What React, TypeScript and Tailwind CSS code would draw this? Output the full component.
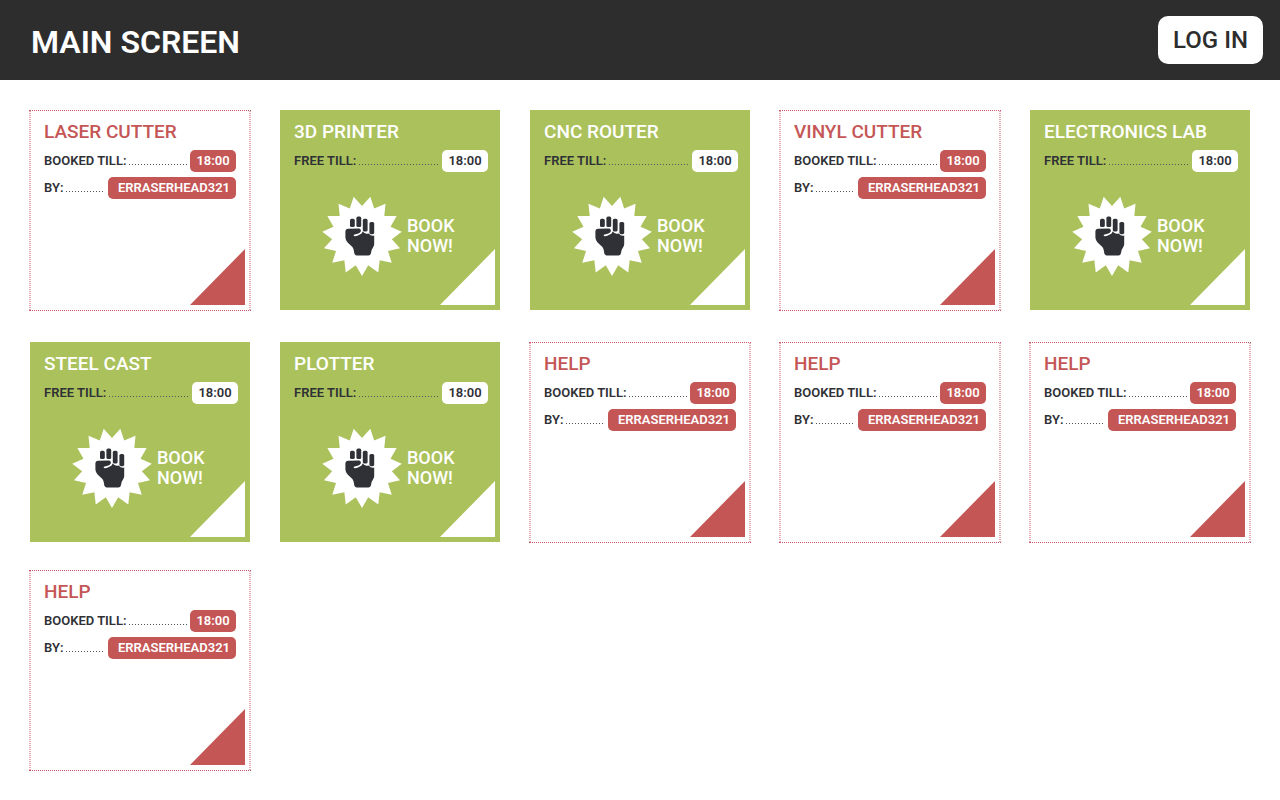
type Station = {
  name: string;
  time: string;
  bookedBy?: string;
};

const stations: Station[] = [
  { name: 'LASER CUTTER', time: '18:00', bookedBy: 'ERRASERHEAD321' },
  { name: '3D PRINTER', time: '18:00' },
  { name: 'CNC ROUTER', time: '18:00' },
  { name: 'VINYL CUTTER', time: '18:00', bookedBy: 'ERRASERHEAD321' },
  { name: 'ELECTRONICS LAB', time: '18:00' },
  { name: 'STEEL CAST', time: '18:00' },
  { name: 'PLOTTER', time: '18:00' },
  { name: 'HELP', time: '18:00', bookedBy: 'ERRASERHEAD321' },
  { name: 'HELP', time: '18:00', bookedBy: 'ERRASERHEAD321' },
  { name: 'HELP', time: '18:00', bookedBy: 'ERRASERHEAD321' },
  { name: 'HELP', time: '18:00', bookedBy: 'ERRASERHEAD321' },
];

const SPIKES = 15;

// Points of a star whose first spike faces straight down.
const starPoints = Array.from({ length: SPIKES * 2 }, (_, i) => {
  const radius = i % 2 === 0 ? 40 : 30;
  const angle = (Math.PI * i) / SPIKES;
  const x = 40 + radius * Math.sin(angle);
  const y = 40 + radius * Math.cos(angle);
  return `${x.toFixed(2)},${y.toFixed(2)}`;
}).join(' ');

function FistBadge() {
  return (
    <svg viewBox="0 0 80 80" className="size-20 shrink-0" aria-hidden="true">
      <polygon points={starPoints} fill="#ffffff" />
      <g fill="#2f3136">
        <rect x="28" y="22.8" width="4.8" height="8.2" rx="1.6" />
        <rect x="34.4" y="20.6" width="4.8" height="10.4" rx="1.6" />
        <rect x="40.8" y="22.8" width="4.8" height="12.8" rx="1.6" />
        <rect x="47.4" y="26" width="4.8" height="12.2" rx="1.6" />
        <path d="M26.2 32.8 Q23.4 33 23.4 35.6 V41.6 Q23.6 44.6 25.6 46.4 L30.4 51 Q31.8 52.6 32 55.6 Q32.2 59.4 34.6 59.4 H46.6 Q48.8 59.4 49 57 Q49.2 53.6 51 51.4 Q52.2 50 52.2 48 V39.4 Q49 40.4 46.8 37.4 Q43 38.6 40.6 35.6 Q40.2 37.8 37.4 38.8 Q34.6 40.6 31.8 40 V38.8 L36.4 37.4 Q39.4 36.2 38.8 34 Q38.4 32.6 36.6 32.6 Z" />
      </g>
    </svg>
  );
}

function Leader() {
  return (
    <span className="mx-[3px] mt-[7px] h-px flex-1 bg-[repeating-linear-gradient(90deg,#55565a_0_1px,transparent_1px_3px)]" />
  );
}

function StationCard({ station }: { station: Station }) {
  const booked = station.bookedBy !== undefined;
  return (
    <article
      className={
        booked
          ? 'relative -mx-px h-[201px] border-y border-dotted border-[#c9586a] bg-[repeating-linear-gradient(#e3a9b1_0_1px,transparent_1px_2px),repeating-linear-gradient(#e3a9b1_0_1px,transparent_1px_2px)] bg-[length:2px_100%] bg-[position:left,right] bg-no-repeat px-[15px] pt-[9px]'
          : 'relative h-[200px] bg-[#abc15c] pt-2.5 pr-3 pl-3.5'
      }
    >
      <h2
        className={
          booked ? 'text-[19px]/6 font-medium text-[#c55656]' : 'text-[19px]/6 font-medium text-white'
        }
      >
        {station.name}
      </h2>
      <dl className="mt-1.5 flex flex-col gap-[5px] text-[13px]/[22px] text-[#2f3136]">
        <div className="flex items-center">
          <dt className="font-semibold">{booked ? 'BOOKED TILL:' : 'FREE TILL:'}</dt>
          <Leader />
          <dd
            className={
              booked
                ? 'w-[46px] rounded-[5px] bg-[#c55656] text-center font-semibold text-white'
                : 'w-[46px] rounded-[5px] bg-white text-center font-semibold'
            }
          >
            {station.time}
          </dd>
        </div>
        {booked && (
          <div className="flex items-center">
            <dt className="font-semibold">BY:</dt>
            <Leader />
            <dd className="min-w-32 rounded-[5px] bg-[#c55656] pr-1.5 pl-2 text-right font-semibold text-white">
              {station.bookedBy}
            </dd>
          </div>
        )}
      </dl>
      {!booked && (
        <button
          type="button"
          className="mt-6 ml-7 flex items-center gap-[5px] text-left text-lg/5 font-medium text-white"
        >
          <FistBadge />
          <span>
            BOOK
            <br />
            NOW!
          </span>
        </button>
      )}
      <span
        className={
          booked
            ? 'absolute right-1.5 bottom-[5px] h-14 w-[55px] bg-[#c55656] [clip-path:polygon(100%_0,100%_100%,0_100%)]'
            : 'absolute right-[5px] bottom-[5px] h-14 w-[55px] bg-white [clip-path:polygon(100%_0,100%_100%,0_100%)]'
        }
      />
    </article>
  );
}

export default function App() {
  return (
    <div className="min-h-screen bg-white font-[Roboto,sans-serif]">
      <header className="flex h-20 items-center justify-between bg-[#2d2d2d] pr-[17px] pl-[31px]">
        <h1 className="pt-1 text-[32px]/10 font-semibold text-white">MAIN SCREEN</h1>
        <button
          type="button"
          className="h-12 rounded-[10px] bg-white px-[15px] text-2xl/8 font-medium text-[#2d2d2d]"
        >
          LOG IN
        </button>
      </header>
      <main className="grid grid-cols-5 grid-rows-[232px_228px_auto] items-start gap-x-[30px] px-[30px] pt-[30px]">
        {stations.map((station, index) => (
          <StationCard key={index} station={station} />
        ))}
      </main>
    </div>
  );
}
